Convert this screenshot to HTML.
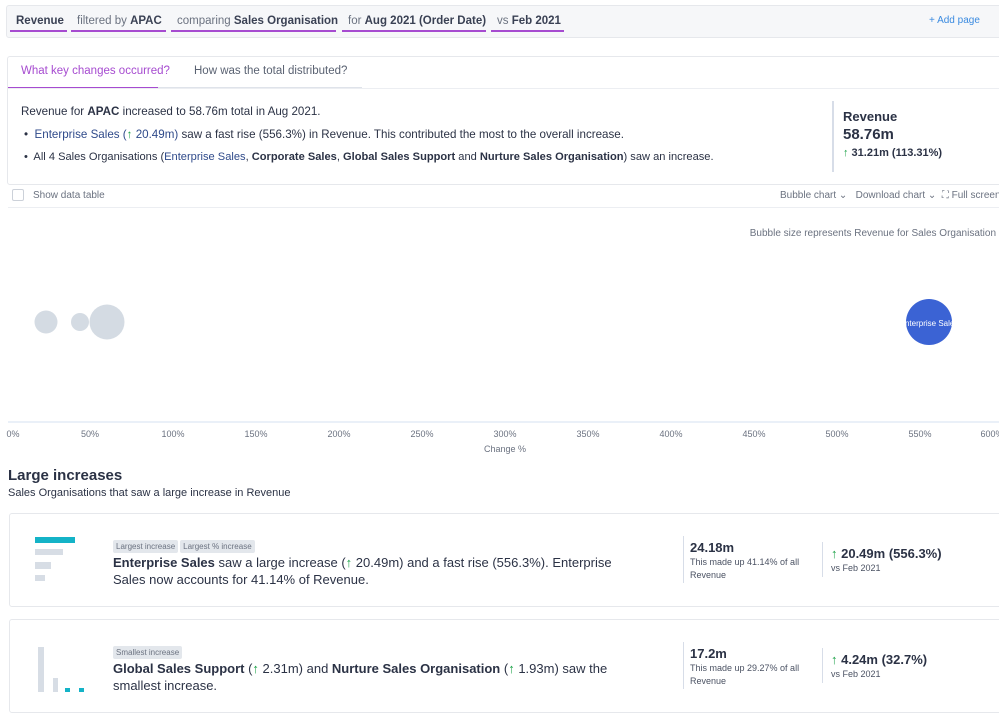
<!DOCTYPE html>
<html><head><meta charset="utf-8"><style>
*{box-sizing:border-box;margin:0;padding:0}
body{width:999px;height:722px;overflow:hidden;background:#fff;font-family:"Liberation Sans",sans-serif;color:#2b3245;position:relative}
.a{position:absolute;white-space:nowrap}
.topbar{position:absolute;left:6px;top:5px;width:1000px;height:33px;background:#f6f7f9;border:1px solid #e6e8ec;border-radius:3px}
.tag{position:absolute;top:13px;font-size:11.5px;line-height:16px;white-space:nowrap;color:#6b7280;padding:0 6px;height:19px;border-bottom:2px solid #a64bd0}
.tag b{color:#3a4154}
.card{position:absolute;border:1px solid #e6e8ec;border-radius:3px;background:#fff}
.g{color:#1fa34a}
.bl{color:#2f4a8a}
.pill{display:inline-block;background:#e3e7ec;color:#6b7280;font-size:8px;padding:2px 3px;border-radius:2px;margin-right:2px}
</style></head><body>
<div class="topbar"></div>
<div class="tag" style="left:10px;width:57px"><b>Revenue</b></div>
<div class="tag" style="left:71px;width:95px">filtered by <b>APAC</b></div>
<div class="tag" style="left:171px;width:165px">comparing <b>Sales Organisation</b></div>
<div class="tag" style="left:342px;width:144px">for <b>Aug 2021 (Order Date)</b></div>
<div class="tag" style="left:491px;width:73px">vs <b>Feb 2021</b></div>
<div class="a" style="left:929px;top:15px;font-size:10px;color:#3b8be0">+ Add page</div>

<div class="card" style="left:7px;top:56px;width:1000px;height:129px"></div>
<div class="a" style="left:8px;top:87px;width:150px;height:2px;background:#a64bd0"></div>
<div class="a" style="left:158px;top:87px;width:204px;height:1px;background:#dfe3ea"></div>
<div class="a" style="left:8px;top:88px;width:991px;height:1px;background:#eceef2"></div>
<div class="a" style="left:21px;top:65px;font-size:11.5px;color:#a64bd0">What key changes occurred?</div>
<div class="a" style="left:194px;top:65px;font-size:11.5px;color:#5a6272">How was the total distributed?</div>
<div class="a" style="left:21px;top:105px;font-size:11.6px">Revenue for <b style="font-weight:600">APAC</b> increased to 58.76m total in Aug 2021.</div>
<div class="a" style="left:24px;top:128px;font-size:11.6px">•&nbsp; <span class="bl">Enterprise Sales (<span class="g">↑</span> 20.49m)</span> saw a fast rise (556.3%) in Revenue. This contributed the most to the overall increase.</div>
<div class="a" style="left:24px;top:151px;font-size:11.1px">•&nbsp; All 4 Sales Organisations (<span class="bl">Enterprise Sales</span>, <b>Corporate Sales</b>, <b>Global Sales Support</b> and <b>Nurture Sales Organisation</b>) saw an increase.</div>
<div class="a" style="left:832px;top:101px;width:2px;height:71px;background:#d7dde8"></div>
<div class="a" style="left:843px;top:109px;font-size:13px;font-weight:bold">Revenue</div>
<div class="a" style="left:843px;top:126px;font-size:15px;font-weight:600">58.76m</div>
<div class="a" style="left:843px;top:147px;font-size:11px;font-weight:bold"><span class="g">↑</span> 31.21m (113.31%)</div>

<div class="a" style="left:12px;top:189px;width:12px;height:12px;border:1px solid #ccd1d9;border-radius:2px"></div>
<div class="a" style="left:33px;top:190px;font-size:10px;color:#6b7280">Show data table</div>
<div class="a" style="left:780px;top:190px;font-size:10px;color:#6b7280">Bubble chart ⌄ &nbsp;&nbsp;Download chart ⌄ &nbsp;⛶ Full screen</div>
<div class="a" style="left:8px;top:207px;width:991px;height:1px;background:#eceef2"></div>
<div class="a" style="right:3px;top:228px;font-size:10px;color:#6b7280">Bubble size represents Revenue for Sales Organisation</div>

<svg class="a" style="left:0;top:0" width="999" height="460">
<circle cx="46" cy="322" r="11.5" fill="#d4dbe3"/>
<circle cx="80" cy="322" r="9" fill="#d4dbe3"/>
<circle cx="107" cy="322" r="17.5" fill="#d4dbe3"/>
<circle cx="929" cy="322" r="23" fill="#3b63d4"/>
<text x="929" y="326" font-size="8" fill="#fff" text-anchor="middle" font-family="Liberation Sans">Enterprise Sales</text>
<line x1="8" y1="422" x2="999" y2="422" stroke="#d6e0f0"/>
<g font-size="9" fill="#6b7280" font-family="Liberation Sans" text-anchor="middle">
<text x="13" y="437">0%</text><text x="90" y="437">50%</text><text x="173" y="437">100%</text><text x="256" y="437">150%</text><text x="339" y="437">200%</text><text x="422" y="437">250%</text><text x="505" y="437">300%</text><text x="588" y="437">350%</text><text x="671" y="437">400%</text><text x="754" y="437">450%</text><text x="837" y="437">500%</text><text x="920" y="437">550%</text><text x="992" y="437">600%</text>
<text x="505" y="452">Change %</text></g>
</svg>

<div class="a" style="left:8px;top:467px;font-size:15px;font-weight:bold">Large increases</div>
<div class="a" style="left:8px;top:487px;font-size:11px">Sales Organisations that saw a large increase in Revenue</div>

<div class="card" style="left:9px;top:513px;width:1000px;height:94px"></div>
<div class="a" style="left:35px;top:537px;width:40px;height:6px;background:#14b3c7"></div>
<div class="a" style="left:35px;top:549px;width:28px;height:6px;background:#d7dde5"></div>
<div class="a" style="left:35px;top:562px;width:16px;height:7px;background:#d7dde5"></div>
<div class="a" style="left:35px;top:575px;width:10px;height:6px;background:#d7dde5"></div>
<div class="a" style="left:113px;top:536px"><span class="pill">Largest increase</span><span class="pill">Largest % increase</span></div>
<div class="a" style="left:113px;top:554px;font-size:13px;line-height:17px;white-space:normal;width:520px"><b>Enterprise Sales</b> saw a large increase (<span class="g">↑</span> 20.49m) and a fast rise (556.3%). Enterprise Sales now accounts for 41.14% of Revenue.</div>
<div class="a" style="left:683px;top:536px;width:1px;height:47px;background:#d7dde8"></div>
<div class="a" style="left:690px;top:540px;font-size:13px;font-weight:bold">24.18m</div>
<div class="a" style="left:690px;top:556px;font-size:9px;line-height:13px;color:#4b5263;white-space:normal;width:110px">This made up 41.14% of all Revenue</div>
<div class="a" style="left:822px;top:542px;width:1px;height:35px;background:#d7dde8"></div>
<div class="a" style="left:831px;top:546px;font-size:13px;font-weight:bold"><span class="g">↑</span> 20.49m (556.3%)</div>
<div class="a" style="left:831px;top:563px;font-size:9px;color:#4b5263">vs Feb 2021</div>

<div class="card" style="left:9px;top:619px;width:1000px;height:94px"></div>
<div class="a" style="left:38px;top:647px;width:6px;height:45px;background:#d7dde5"></div>
<div class="a" style="left:53px;top:678px;width:5px;height:14px;background:#d7dde5"></div>
<div class="a" style="left:65px;top:688px;width:5px;height:4px;background:#14b3c7"></div>
<div class="a" style="left:79px;top:688px;width:5px;height:4px;background:#14b3c7"></div>
<div class="a" style="left:113px;top:642px"><span class="pill">Smallest increase</span></div>
<div class="a" style="left:113px;top:660px;font-size:13px;line-height:17px;white-space:normal;width:520px"><b>Global Sales Support</b> (<span class="g">↑</span> 2.31m) and <b>Nurture Sales Organisation</b> (<span class="g">↑</span> 1.93m) saw the smallest increase.</div>
<div class="a" style="left:683px;top:642px;width:1px;height:47px;background:#d7dde8"></div>
<div class="a" style="left:690px;top:646px;font-size:13px;font-weight:bold">17.2m</div>
<div class="a" style="left:690px;top:662px;font-size:9px;line-height:13px;color:#4b5263;white-space:normal;width:110px">This made up 29.27% of all Revenue</div>
<div class="a" style="left:822px;top:648px;width:1px;height:35px;background:#d7dde8"></div>
<div class="a" style="left:831px;top:652px;font-size:13px;font-weight:bold"><span class="g">↑</span> 4.24m (32.7%)</div>
<div class="a" style="left:831px;top:669px;font-size:9px;color:#4b5263">vs Feb 2021</div>
</body></html>
